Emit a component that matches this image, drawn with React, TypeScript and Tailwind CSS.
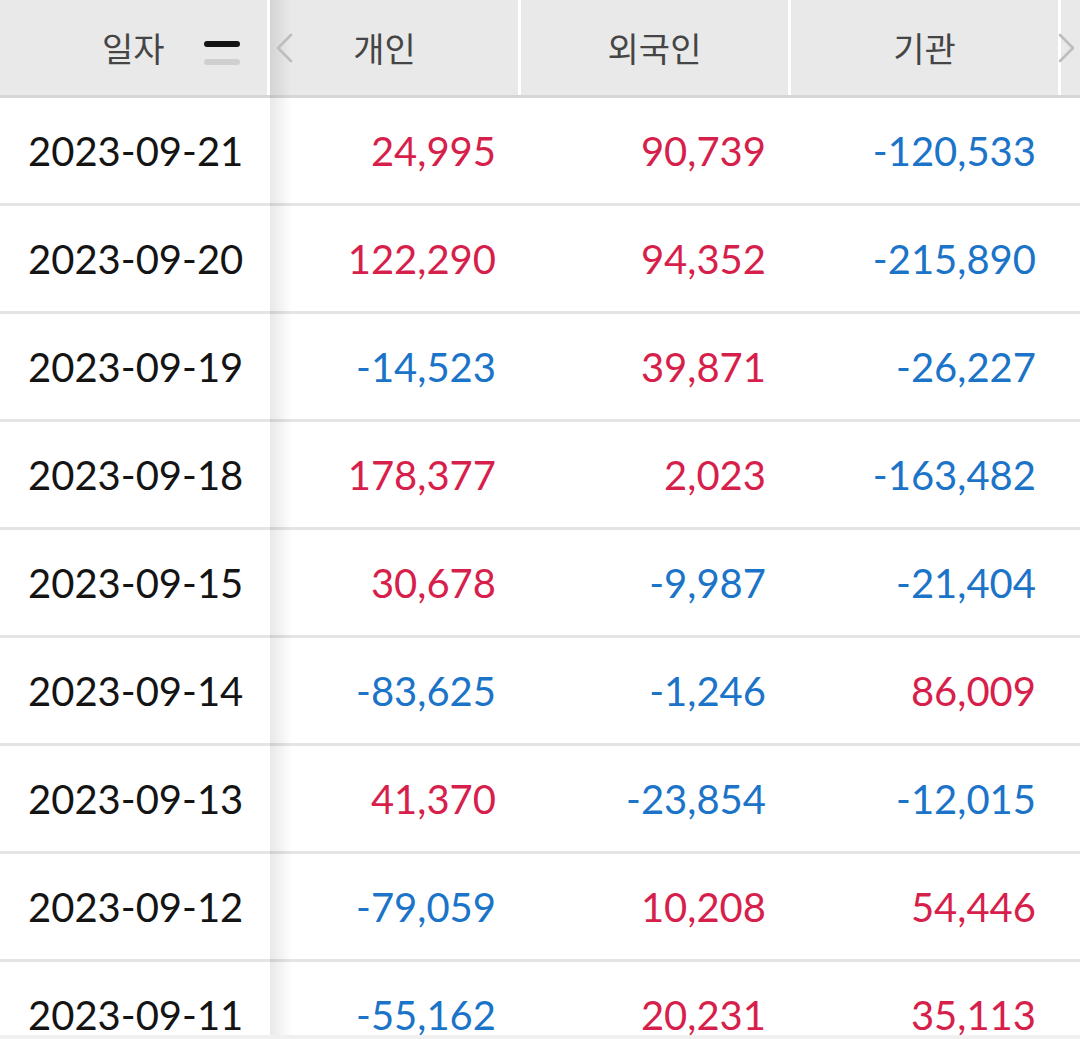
import React from "react";

type Row = { date: string; vals: string[] };

const rows: Row[] = [
  { date: "2023-09-21", vals: ["24,995", "90,739", "-120,533"] },
  { date: "2023-09-20", vals: ["122,290", "94,352", "-215,890"] },
  { date: "2023-09-19", vals: ["-14,523", "39,871", "-26,227"] },
  { date: "2023-09-18", vals: ["178,377", "2,023", "-163,482"] },
  { date: "2023-09-15", vals: ["30,678", "-9,987", "-21,404"] },
  { date: "2023-09-14", vals: ["-83,625", "-1,246", "86,009"] },
  { date: "2023-09-13", vals: ["41,370", "-23,854", "-12,015"] },
  { date: "2023-09-12", vals: ["-79,059", "10,208", "54,446"] },
  { date: "2023-09-11", vals: ["-55,162", "20,231", "35,113"] },
];

const headers = ["개인", "외국인", "기관"];

function Cell({ v }: { v: string }) {
  const neg = v.startsWith("-");
  return (
    <div
      className={`w-[267px] mr-[3px] shrink-0 flex items-center justify-end pr-[22px] text-[40px] ${
        neg ? "text-[#1b74c8]" : "text-[#d71f4c]"
      }`}
    >
      {v}
    </div>
  );
}

export default function App() {
  return (
    <div
      className="w-[1080px] h-[1039px] overflow-hidden bg-white flex flex-col"
      style={{ fontFamily: "Lato, 'Noto Sans CJK KR', sans-serif" }}
    >
      <div className="relative h-[1035px] overflow-hidden">
        {/* Header */}
        <div className="flex h-[98px] bg-[#e9e9e9] border-b-[3px] border-[#d6d6d6]">
          <div className="w-[267px] shrink-0 flex items-center pl-[102px]">
            <span
              className="text-[34px] text-[#454545] leading-none"
              style={{ fontFamily: "'Noto Sans CJK KR', sans-serif" }}
            >
              일자
            </span>
            <span className="ml-[39px] mt-[10px] flex flex-col gap-[12px]">
              <span className="block w-[36px] h-[6px] rounded-full bg-[#141414]" />
              <span className="block w-[36px] h-[6px] rounded-full bg-[#cfcfcf]" />
            </span>
          </div>
          <div className="w-[3px] shrink-0 bg-white" />
          <div className="flex-1 overflow-hidden">
            <div className="flex h-full ml-[-19px]">
              {headers.map((h) => (
                <div key={h} className="flex h-full shrink-0">
                  <div
                    className="w-[267px] flex items-center justify-center text-[34px] text-[#454545]"
                    style={{ fontFamily: "'Noto Sans CJK KR', sans-serif" }}
                  >
                    {h}
                  </div>
                  <div className="w-[3px] bg-white" />
                </div>
              ))}
              <div className="w-[267px] shrink-0" />
            </div>
          </div>
        </div>

        {/* Body */}
        {rows.map((r) => (
          <div key={r.date} className="flex h-[108px] border-b-[3px] border-[#e4e4e4]">
            <div className="w-[270px] shrink-0 flex items-center pl-[28px] text-[40px] text-[#141414]">
              {r.date}
            </div>
            <div className="flex-1 overflow-hidden">
              <div className="flex h-full ml-[-19px]">
                {r.vals.map((v, i) => (
                  <Cell key={i} v={v} />
                ))}
                <div className="w-[267px] shrink-0" />
              </div>
            </div>
          </div>
        ))}

        {/* fixed column shadow */}
        <div className="absolute top-0 bottom-0 left-[270px] w-[22px] bg-gradient-to-r from-black/[0.09] to-transparent pointer-events-none" />

        {/* scroll arrows */}
        <svg className="absolute left-[274px] top-[33px]" width="20" height="30" viewBox="0 0 20 30">
          <polyline points="17,2 4,15 17,28" fill="none" stroke="#bdbdbd" strokeWidth="2.6" strokeLinecap="round" strokeLinejoin="round" />
        </svg>
        <svg className="absolute left-[1057px] top-[33px]" width="20" height="30" viewBox="0 0 20 30">
          <polyline points="3,2 16,15 3,28" fill="none" stroke="#bdbdbd" strokeWidth="2.6" strokeLinecap="round" strokeLinejoin="round" />
        </svg>
      </div>
      <div className="h-[4px] bg-[#f0f0f0]" />
    </div>
  );
}
